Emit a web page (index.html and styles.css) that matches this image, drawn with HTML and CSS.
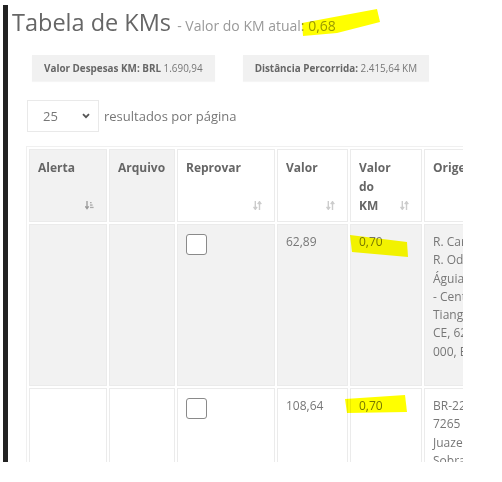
FILE: index.html
```html
<!DOCTYPE html>
<html lang="pt-BR">
<head>
<meta charset="utf-8">
<title>Tabela de KMs</title>
<link rel="stylesheet" href="styles.css">
</head>
<body>
<div class="page">
  <h1 class="title">Tabela de KMs <small class="subtitle">- Valor do KM atual: 0,68</small></h1>
  <div class="content">
    <div class="badges">
      <div class="badge"><b>Valor Despesas KM: BRL</b> 1.690,94</div>
      <div class="badge"><b>Distância Percorrida:</b> 2.415,64 KM</div>
    </div>
    <div class="length">
      <div class="select">
        <span>25</span>
        <svg class="chev" width="8" height="6" viewBox="0 0 8 6"><polyline points="1,1.2 4,4.2 7,1.2" fill="none" stroke="#555" stroke-width="1.8"/></svg>
      </div>
      <span class="length-label">resultados por página</span>
    </div>
    <table class="grid">
      <colgroup>
        <col class="c-alerta"><col class="c-arquivo"><col class="c-reprovar"><col class="c-valor"><col class="c-km"><col class="c-origem">
      </colgroup>
      <thead>
        <tr>
          <th class="shaded">Alerta
            <svg class="sort active" width="9" height="9" viewBox="0 0 9 9"><path d="M2 0v7M0.3 5.3L2 7.6 3.7 5.3" fill="none" stroke="#999" stroke-width="1.3"/><rect x="5" y="1" width="1.6" height="1.3" fill="#aaa"/><rect x="5" y="3.4" width="2.6" height="1.3" fill="#aaa"/><rect x="5" y="5.8" width="3.6" height="1.3" fill="#aaa"/></svg>
          </th>
          <th class="shaded">Arquivo</th>
          <th>Reprovar
            <svg class="sort" width="9" height="9" viewBox="0 0 9 9"><path d="M2.3 0v8M0.5 5.8L2.3 8.3 4.1 5.8M6.5 9V1M4.7 3.2L6.5 0.7 8.3 3.2" fill="none" stroke="#ccc" stroke-width="1.4"/></svg>
          </th>
          <th>Valor
            <svg class="sort" width="9" height="9" viewBox="0 0 9 9"><path d="M2.3 0v8M0.5 5.8L2.3 8.3 4.1 5.8M6.5 9V1M4.7 3.2L6.5 0.7 8.3 3.2" fill="none" stroke="#ccc" stroke-width="1.4"/></svg>
          </th>
          <th class="narrow">Valor do KM
            <svg class="sort" width="9" height="9" viewBox="0 0 9 9"><path d="M2.3 0v8M0.5 5.8L2.3 8.3 4.1 5.8M6.5 9V1M4.7 3.2L6.5 0.7 8.3 3.2" fill="none" stroke="#ccc" stroke-width="1.4"/></svg>
          </th>
          <th>Origem</th>
        </tr>
      </thead>
      <tbody>
        <tr class="odd">
          <td></td>
          <td></td>
          <td><span class="check"></span></td>
          <td>62,89</td>
          <td>0,70</td>
          <td class="addr">R. Carlos<br>R. Odilon<br>Águia<br>- Centro,<br>Tianguá -<br>CE, 62320-<br>000, Brasil</td>
        </tr>
        <tr>
          <td></td>
          <td></td>
          <td><span class="check"></span></td>
          <td>108,64</td>
          <td>0,70</td>
          <td class="addr">BR-222,<br>7265 -<br>Juazeiro,<br>Sobral -<br>CE</td>
        </tr>
      </tbody>
    </table>
  </div>
</div>
<svg class="marker" width="502" height="482" viewBox="0 0 502 482">
  <polygon points="302,23 377,9 380,22 337,33 303,36" fill="#ffff00"/>
  <polygon points="350,235 407,242 408,257 352,252" fill="#ffff00"/>
  <polygon points="345,399 405,395 407,412 347,413" fill="#ffff00"/>
</svg>
</body>
</html>
```

FILE: styles.css
```css
html, body {
  margin: 0;
  padding: 0;
  background: #fff;
}
body {
  font-family: "Open Sans", "Noto Sans", sans-serif;
  color: #777;
  width: 502px;
  height: 482px;
  position: relative;
  overflow: hidden;
}
.page {
  margin: 5px 0 0 3px;
  width: 451px;
  height: 457px;
  border-left: 5px solid #222;
  padding-left: 4px;
  overflow: hidden;
}
.title {
  margin: 0;
  font-size: 23.5px;
  font-weight: 400;
  color: #666;
  line-height: 34px;
  white-space: nowrap;
}
.subtitle {
  font-size: 14px;
  line-height: 1;
  color: #999;
}
.content {
  padding-left: 15px;
}
.badges {
  display: flex;
  gap: 28px;
  margin: 16px 0 0 5px;
}
.badge {
  height: 26px;
  line-height: 26px;
  padding: 0 12px;
  background: #f1f1f1;
  font-size: 9.9px;
  color: #777;
  white-space: nowrap;
  box-shadow: 0 1px 1px rgba(0,0,0,0.04);
}
.badge b {
  color: #666;
}
.length {
  display: flex;
  align-items: center;
  gap: 5px;
  margin-top: 19px;
}
.select {
  border: 1px solid #e9e9e9;
  display: flex;
  align-items: center;
  justify-content: space-between;
  padding: 0 8px 0 15px;
  box-sizing: border-box;
  width: 72px;
  height: 32px;
  font-size: 13px;
  color: #777;
}
.length-label {
  font-size: 13px;
  color: #777;
}
.grid {
  margin-top: 14px;
  margin-left: -1px;
  table-layout: fixed;
  width: 551px;
  border-collapse: separate;
  border-spacing: 2px;
  border: 1px solid #f0f0f0;
}
.c-alerta { width: 78px; }
.c-arquivo { width: 66px; }
.c-reprovar { width: 98px; }
.c-valor { width: 71px; }
.c-km { width: 72px; }
.c-origem { width: 150px; }
.grid th, .grid td {
  border: 1px solid #ebebeb;
  vertical-align: top;
  text-align: left;
}
.grid th {
  position: relative;
  height: 57px;
  padding: 8px 24px 6px 8px;
  font-size: 12px;
  font-weight: 700;
  color: #666;
  line-height: 19px;
  background: #fff;
}
.grid th.narrow {
  padding-right: 32px;
}
.grid th.shaded {
  background: #f2f2f2;
}
.sort {
  position: absolute;
  right: 12px;
  bottom: 11px;
}
.grid td {
  padding: 8px 8px 24px 8px;
  font-size: 12px;
  line-height: 18.3px;
  color: #777;
}
.grid tr.odd td {
  background: #f2f2f2;
}
.addr {
  white-space: nowrap;
}
.check {
  display: block;
  width: 21px;
  height: 21px;
  box-sizing: border-box;
  border: 1px solid #8a8a8a;
  border-radius: 3px;
  background: #fff;
  margin-top: 1px;
}
.marker {
  position: absolute;
  left: 0;
  top: 0;
  pointer-events: none;
  mix-blend-mode: multiply;
}
```
